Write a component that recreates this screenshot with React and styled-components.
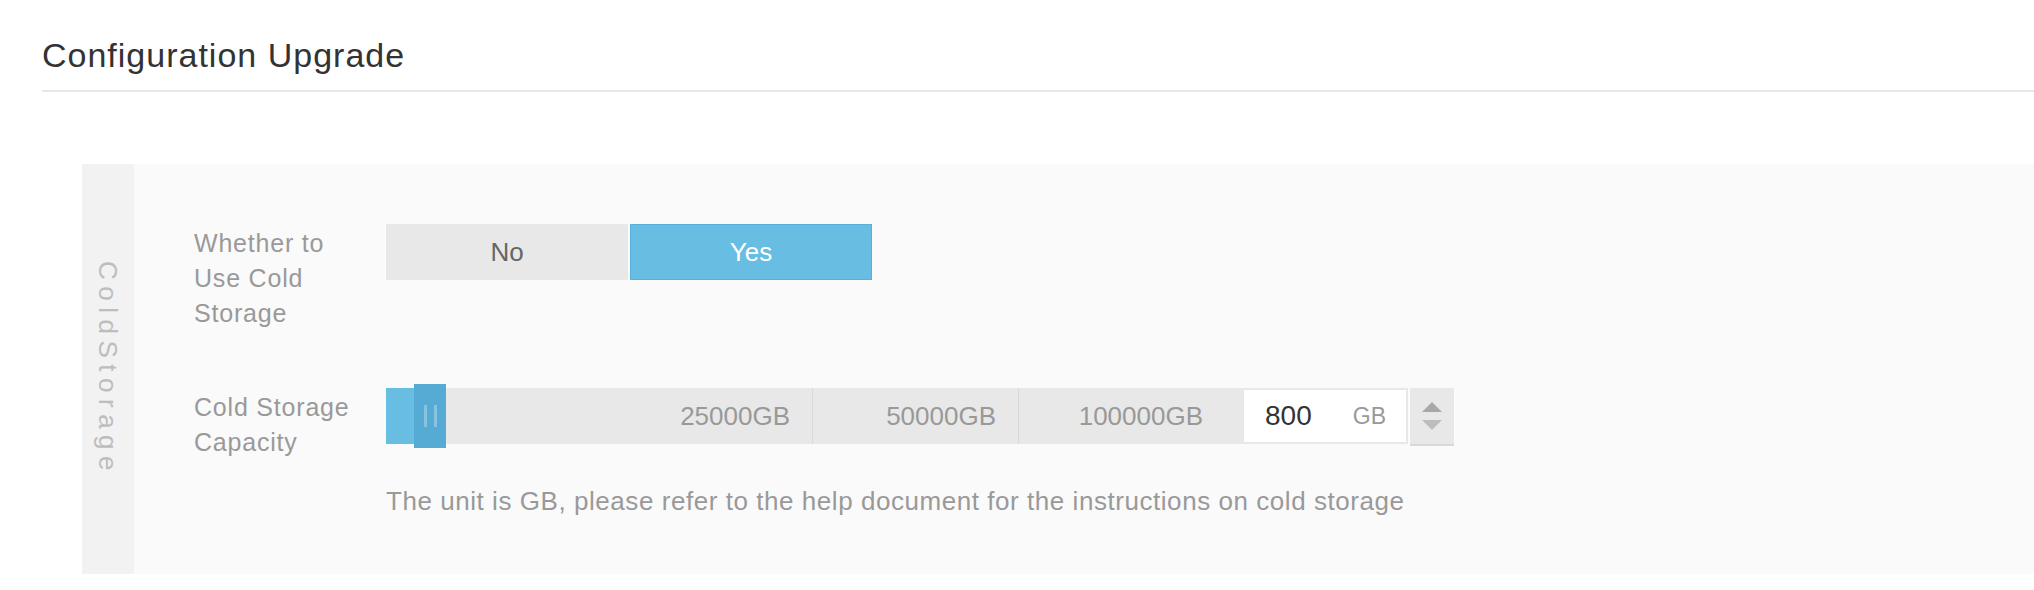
import styled, { createGlobalStyle } from "styled-components";

const GlobalStyle = createGlobalStyle`
	html, body {
		margin: 0;
		padding: 0;
		background: #fff;
	}
	body {
		font-family: "Liberation Sans", Arial, Helvetica, sans-serif;
	}
`;

const segments = [
	{ label: "25000GB", width: 427 },
	{ label: "50000GB", width: 206 },
	{ label: "100000GB", width: 206 },
];

const App = () => {
	return (
		<>
			<GlobalStyle />
			<Page>
				<Header>
					<Title>Configuration Upgrade</Title>
				</Header>

				<Panel>
					<SideTab>
						<SideText>ColdStorage</SideText>
					</SideTab>

					<Body>
						<FormRow>
							<Label>Whether to Use Cold Storage</Label>
							<Toggle>
								<ToggleButton>No</ToggleButton>
								<ToggleButton $active>Yes</ToggleButton>
							</Toggle>
						</FormRow>

						<FormRow $spaced>
							<Label>Cold Storage Capacity</Label>
							<Control>
								<SliderRow>
									<Track>
										{segments.map((s) => (
											<Segment key={s.label} style={{ width: s.width }}>
												{s.label}
											</Segment>
										))}
										<Fill style={{ width: 28 }} />
										<Handle style={{ left: 28 }}>
											<Grip />
											<Grip />
										</Handle>
									</Track>
									<NumberBox>
										<Value>800</Value>
										<Unit>GB</Unit>
									</NumberBox>
									<Spinner>
										<svg width="20" height="28" viewBox="0 0 20 28">
											<polygon points="10,0 20,10 0,10" fill="#a8a8a8" />
											<polygon points="0,18 20,18 10,28" fill="#bdbdbd" />
										</svg>
									</Spinner>
								</SliderRow>
								<Hint>
									The unit is GB, please refer to the help document for the
									instructions on cold storage
								</Hint>
							</Control>
						</FormRow>
					</Body>
				</Panel>
			</Page>
		</>
	);
};

const Page = styled.div`
	width: 100%;
	min-height: 590px;
`;

const Header = styled.div`
	margin-left: 42px;
	padding-top: 35px;
	padding-bottom: 15px;
	border-bottom: 2px solid #e3e8ec;
`;

const Title = styled.h1`
	margin: 0;
	font-size: 34px;
	line-height: 40px;
	font-weight: 400;
	letter-spacing: 1px;
	color: #333;
`;

const Panel = styled.section`
	display: flex;
	margin-top: 72px;
	margin-left: 82px;
	background: #fafafa;
`;

const SideTab = styled.div`
	width: 52px;
	flex-shrink: 0;
	background: #f2f2f2;
	display: flex;
	align-items: center;
	justify-content: center;
`;

const SideText = styled.span`
	writing-mode: vertical-rl;
	font-size: 26px;
	line-height: 30px;
	letter-spacing: 6.5px;
	color: #bdbdbd;
`;

const Body = styled.div`
	flex: 1;
	padding: 60px 0 55px 60px;
`;

const FormRow = styled.div`
	display: grid;
	grid-template-columns: 192px 1fr;
	align-items: start;
	margin-top: ${({ $spaced }) => ($spaced ? "57px" : "0")};
`;

const Label = styled.div`
	width: 170px;
	padding-top: 2px;
	font-size: 25px;
	line-height: 35px;
	letter-spacing: 0.8px;
	color: #999;
`;

const Toggle = styled.div`
	display: flex;
	gap: 2px;
`;

const ToggleButton = styled.button`
	width: 242px;
	height: 56px;
	padding: 0;
	font-family: inherit;
	font-size: 26px;
	line-height: 54px;
	cursor: pointer;
	border: 1px solid ${({ $active }) => ($active ? "#5aaedb" : "#e8e8e8")};
	background: ${({ $active }) => ($active ? "#67bde2" : "#e8e8e8")};
	color: ${({ $active }) => ($active ? "#fff" : "#666")};
`;

const Control = styled.div`
	display: flex;
	flex-direction: column;
`;

const SliderRow = styled.div`
	display: flex;
	align-items: flex-start;
`;

const Track = styled.div`
	position: relative;
	display: flex;
	height: 56px;
	padding-right: 17px;
	background: #e8e8e8;
`;

const Segment = styled.div`
	box-sizing: border-box;
	height: 56px;
	padding-right: 22px;
	text-align: right;
	font-size: 26px;
	line-height: 56px;
	color: #999;
	border-right: 1px solid #d9d9d9;

	&:nth-child(3) {
		border-right: none;
	}
`;

const Fill = styled.div`
	position: absolute;
	left: 0;
	top: 0;
	height: 56px;
	background: #67bde2;
`;

const Handle = styled.div`
	position: absolute;
	top: -4px;
	width: 32px;
	height: 64px;
	background: #55abd4;
	display: flex;
	align-items: center;
	justify-content: center;
	gap: 7px;
	cursor: grab;
`;

const Grip = styled.span`
	width: 3px;
	height: 22px;
	background: rgba(255, 255, 255, 0.3);
`;

const NumberBox = styled.div`
	box-sizing: border-box;
	width: 166px;
	height: 56px;
	border: 2px solid #e8e8e8;
	background: #fff;
	display: flex;
	align-items: center;
	justify-content: space-between;
	padding: 0 20px 0 21px;
`;

const Value = styled.span`
	font-size: 28px;
	color: #333;
`;

const Unit = styled.span`
	font-size: 23px;
	color: #999;
`;

const Spinner = styled.div`
	width: 44px;
	height: 56px;
	margin-left: 2px;
	background: #e8e8e8;
	border-bottom: 2px solid #d8d8d8;
	display: flex;
	align-items: center;
	justify-content: center;
	cursor: pointer;
`;

const Hint = styled.p`
	margin: 37px 0 0;
	font-size: 26px;
	line-height: 36px;
	letter-spacing: 0.55px;
	color: #999;
`;

export default App;
